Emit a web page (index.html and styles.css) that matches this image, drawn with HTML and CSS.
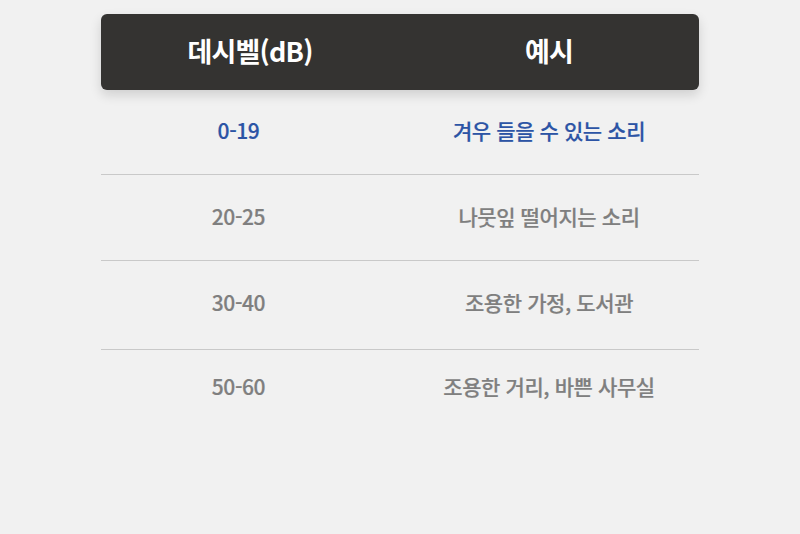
FILE: index.html
```html
<!DOCTYPE html>
<html lang="ko">
<head>
<meta charset="utf-8">
<link rel="stylesheet" href="styles.css">
</head>
<body>
<div class="table">
  <div class="head">
    <div class="hcell hcell-level">데시벨(dB)</div>
    <div class="hcell">예시</div>
  </div>
  <div class="row row-active">
    <div class="cell cell-level">0-19</div>
    <div class="cell">겨우 들을 수 있는 소리</div>
  </div>
  <div class="row">
    <div class="cell cell-level">20-25</div>
    <div class="cell">나뭇잎 떨어지는 소리</div>
  </div>
  <div class="row row-tall">
    <div class="cell cell-level">30-40</div>
    <div class="cell">조용한 가정, 도서관</div>
  </div>
  <div class="row row-last">
    <div class="cell cell-level">50-60</div>
    <div class="cell">조용한 거리, 바쁜 사무실</div>
  </div>
</div>
</body>
</html>
```

FILE: styles.css
```css
html, body {
  margin: 0;
  padding: 0;
  background: #f1f1f1;
}
body {
  font-family: "Noto Sans CJK KR", "Noto Sans", sans-serif;
  height: 534px;
  overflow: hidden;
}
.table {
  width: 598px;
  margin: 14px auto 0;
}
.head {
  display: grid;
  grid-template-columns: 298px 300px;
  height: 76px;
  align-items: center;
  background: #343331;
  border-radius: 6px;
  box-shadow: 0 5px 12px rgba(0, 0, 0, 0.14);
  color: #ffffff;
  font-size: 27px;
  font-weight: 700;
  letter-spacing: -0.8px;
}
.hcell {
  text-align: center;
  line-height: 30px;
  padding-bottom: 2px;
}
.row {
  display: grid;
  grid-template-columns: 298px 300px;
  align-items: center;
  height: 85px;
  border-bottom: 1px solid #c9c9c9;
  color: #7f7f7f;
  font-size: 21px;
  font-weight: 500;
  letter-spacing: -0.4px;
}
.row-active {
  height: 84px;
  color: #2c54a5;
}
.row-tall {
  height: 88px;
}
.row-last {
  border-bottom: none;
  height: 76px;
}
.cell {
  text-align: center;
  line-height: 28px;
  padding-bottom: 4px;
  -webkit-text-stroke: 0.2px currentColor;
}
.row-tall .cell {
  padding-bottom: 6px;
}
.cell-level {
  padding-right: 23px;
}
```
